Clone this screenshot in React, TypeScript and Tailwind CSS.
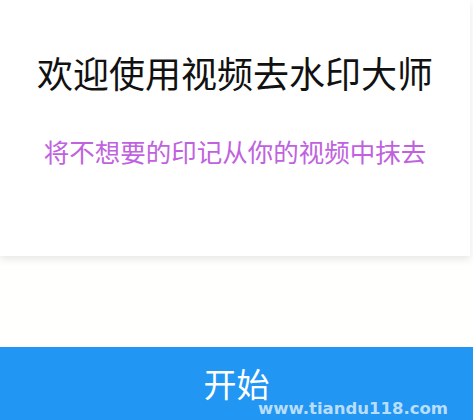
export default function App() {
  return (
    <div
      className="relative flex h-[420px] w-full flex-col overflow-hidden bg-[#fffffe]"
      style={{ fontFamily: '"Noto Sans CJK SC", "Noto Sans", sans-serif' }}
    >
      {/* Intro card */}
      <div className="mr-[3px] flex h-[256px] flex-col items-center bg-white shadow-[0_3px_8px_rgba(0,0,0,0.1)]">
        <h1 className="mt-[50px] text-[36px] leading-[44px] font-normal text-[#111]">
          欢迎使用视频去水印大师
        </h1>
        <p className="mt-[41px] text-[25.5px] leading-[32px] text-[#c062e0]">
          将不想要的印记从你的视频中抹去
        </p>
      </div>

      <div className="flex-1" />

      {/* Start button */}
      <button className="flex h-[73px] w-full items-center justify-center bg-[#2196f3] text-[33px] leading-none text-white">
        开始
      </button>

      {/* Watermark */}
      <span
        className="absolute right-[25px] bottom-[-2px] text-[16.5px] font-bold text-white/70"
        style={{ fontFamily: '"DejaVu Sans", sans-serif' }}
      >
        www.tiandu118.com
      </span>
    </div>
  );
}
